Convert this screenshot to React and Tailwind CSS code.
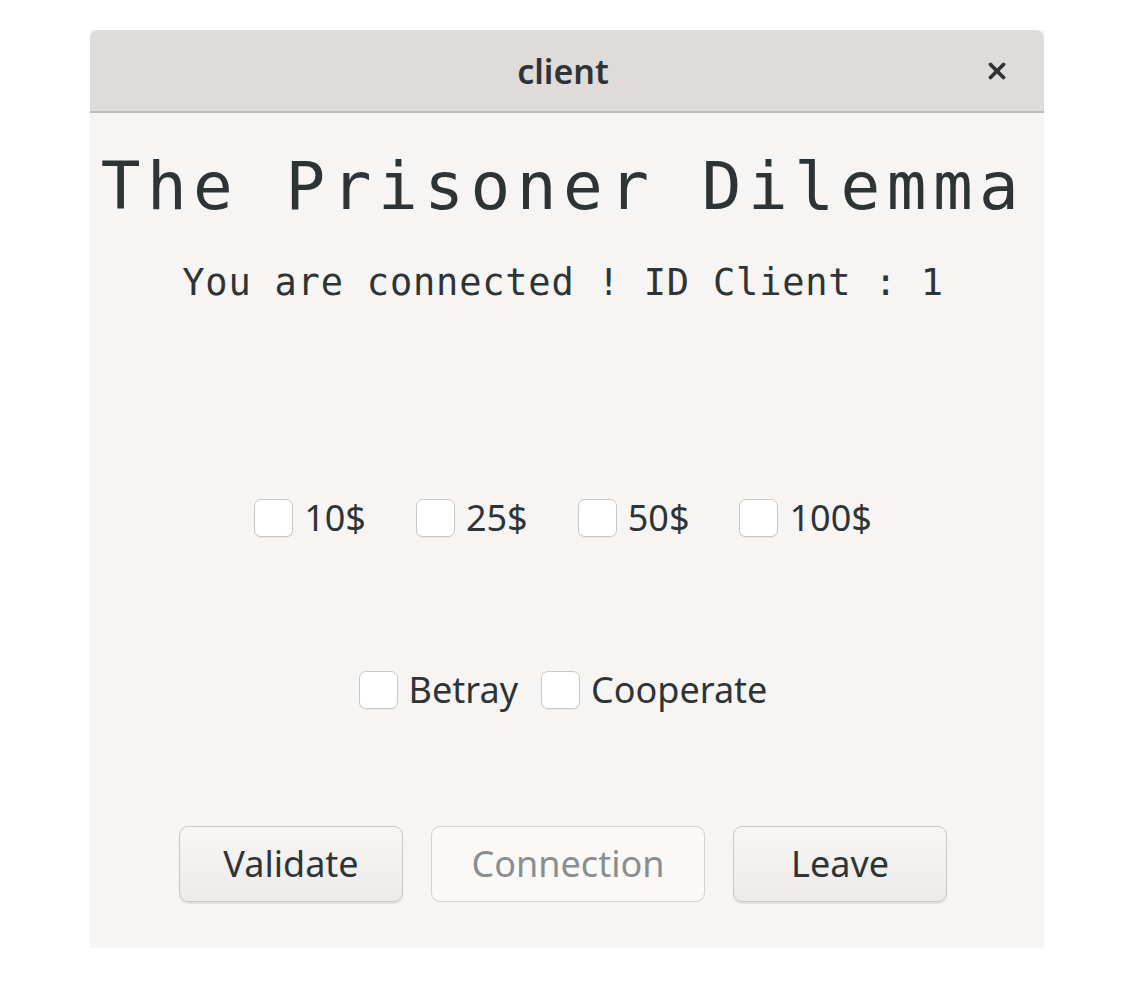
import { X } from "lucide-react";

const sans = "font-['Noto_Sans','Open_Sans',sans-serif]";
const mono = "font-['DejaVu_Sans_Mono','Liberation_Mono',monospace]";

const Check = ({ label }) => (
  <label className="flex items-center gap-[11px]">
    <span className="h-[38px] w-[39px] rounded-[7px] border-[1.5px] border-[#cdc7c2] bg-white shadow-[0_1px_0_rgba(0,0,0,0.05)]" />
    <span className="text-[36px] leading-none text-[#2e3436]">{label}</span>
  </label>
);

const Button = ({ children, width, disabled }) => (
  <button
    type="button"
    className={
      "flex h-[76px] items-center justify-center rounded-[9px] border-[1.5px] text-[36px] " +
      width +
      (disabled
        ? " border-[#d6d1cd] bg-[#faf9f8] text-[#8b8e8f]"
        : " border-[#cdc7c2] bg-[linear-gradient(180deg,#f7f6f5,#edebe9)] text-[#2e3436] shadow-[0_2px_1px_rgba(0,0,0,0.08)]")
    }
  >
    {children}
  </button>
);

export default function App() {
  return (
    <div className={"min-h-[986px] w-[1132px] bg-white pt-[30px] " + sans}>
      <div className="ml-[90px] flex h-[918px] w-[954px] flex-col bg-[#f6f5f4]">
        <div className="relative flex h-[83px] items-center justify-center rounded-t-[8px] border-b-2 border-[#c0bbb5] bg-[#dedbd8] pr-[8px]">
          <span className="text-[34px] font-semibold leading-none text-[#2e3436]">client</span>
          <X className="absolute right-[34px] top-[28px] text-[#2e3436]" size={26} strokeWidth={3.5} />
        </div>

        <div className="flex flex-col pr-[8px]">
          <h1 className={"mt-[41px] text-center text-[66px] leading-none tracking-[6.5px] text-[#2e3436] " + mono}>
            The Prisoner Dilemma
          </h1>
          <p className={"mt-[44px] text-center text-[37px] leading-none tracking-[0.8px] text-[#2e3436] " + mono}>
            You are connected ! ID Client : 1
          </p>

          <div className="mt-[198px] flex justify-center gap-[50px]">
            <Check label="10$" />
            <Check label="25$" />
            <Check label="50$" />
            <Check label="100$" />
          </div>

          <div className="mt-[134px] flex justify-center gap-[23px]">
            <Check label="Betray" />
            <Check label="Cooperate" />
          </div>

          <div className="mt-[117px] flex justify-center gap-[28px]">
            <Button width="w-[224px]">Validate</Button>
            <Button width="w-[274px]" disabled>
              Connection
            </Button>
            <Button width="w-[214px]">Leave</Button>
          </div>
        </div>
      </div>
    </div>
  );
}
